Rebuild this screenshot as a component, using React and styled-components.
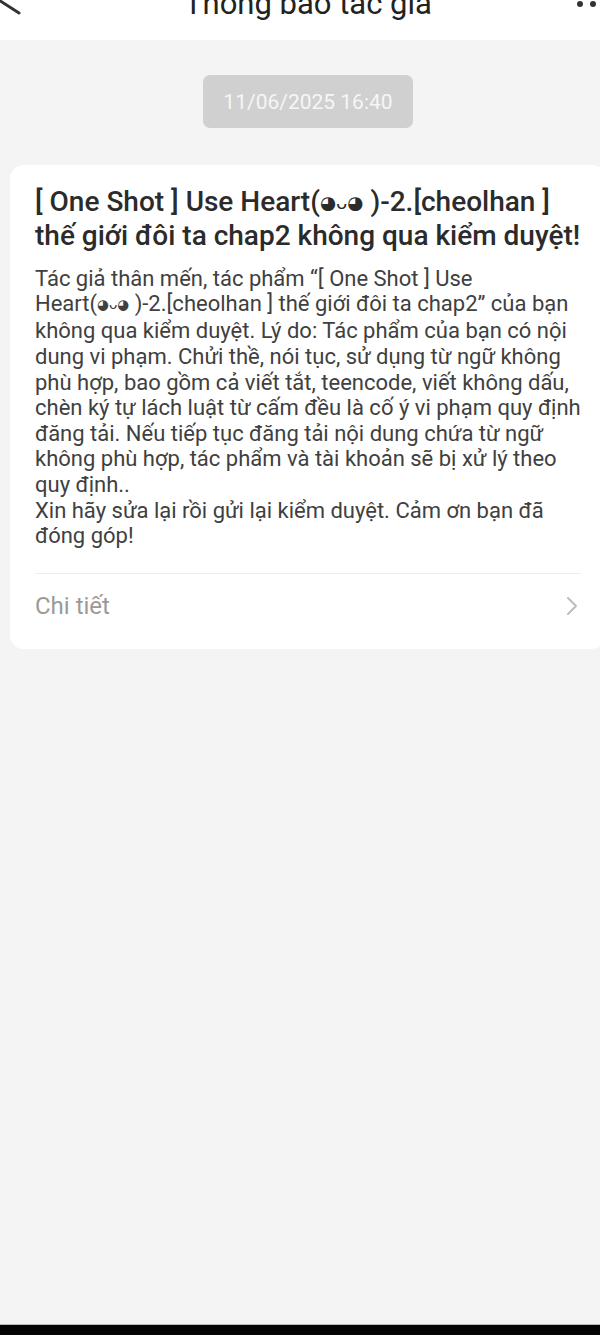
import React from "react";
import styled, { createGlobalStyle } from "styled-components";

const GlobalStyle = createGlobalStyle`
  html, body {
    margin: 0;
    padding: 0;
    background: #f4f4f4;
    overflow-x: hidden;
  }
  body {
    font-family: Roboto, "Noto Sans", "DejaVu Sans", sans-serif;
  }
`;

const Face = ({ size }) => <Emo $size={size}>◕ᴗ◕</Emo>;

// line breaks follow the app's own wrapping
const bodyLines = [
  <>Tác giả thân mến, tác phẩm “[ One Shot ] Use</>,
  <>
    Heart(<Face size="0.62em" /> )-2.[cheolhan ] thế giới đôi ta chap2” của bạn
  </>,
  <>không qua kiểm duyệt. Lý do: Tác phẩm của bạn có nội</>,
  <>dung vi phạm. Chửi thề, nói tục, sử dụng từ ngữ không</>,
  <>phù hợp, bao gồm cả viết tắt, teencode, viết không dấu,</>,
  <>chèn ký tự lách luật từ cấm đều là cố ý vi phạm quy định</>,
  <>đăng tải. Nếu tiếp tục đăng tải nội dung chứa từ ngữ</>,
  <>không phù hợp, tác phẩm và tài khoản sẽ bị xử lý theo</>,
  <>quy định..</>,
  <>Xin hãy sửa lại rồi gửi lại kiểm duyệt. Cảm ơn bạn đã</>,
  <>đóng góp!</>,
];

const App = () => {
  return (
    <Screen>
      <GlobalStyle />
      <Header>
        <NavBar>
          <NavSlot>
            <BackIcon viewBox="0 0 32 32">
              <path d="M27 -6 L2 10 L27 26" />
            </BackIcon>
          </NavSlot>
          <Title>Thông báo tác giả</Title>
          <NavSlot $right>
            <MoreIcon viewBox="0 0 32 8">
              <circle cx="3" cy="4" r="3" />
              <circle cx="16" cy="4" r="3" />
              <circle cx="29" cy="4" r="3" />
            </MoreIcon>
          </NavSlot>
        </NavBar>
      </Header>
      <Content>
        <DateBadge>11/06/2025 16:40</DateBadge>
        <Card>
          <CardTitle>
            [ One Shot ] Use Heart(<Face size="0.66em" /> )-2.[cheolhan ] thế giới đôi ta chap2
            không qua kiểm duyệt!
          </CardTitle>
          <CardBody>
            {bodyLines.map((line, i) => (
              <BodyLine key={i}>{line}</BodyLine>
            ))}
          </CardBody>
          <DetailRow>
            <span>Chi tiết</span>
            <Chevron viewBox="0 0 12 20">
              <path d="M2 2 L10 10 L2 18" />
            </Chevron>
          </DetailRow>
        </Card>
      </Content>
      <BottomBar />
    </Screen>
  );
};

export default App;

const Screen = styled.div`
  width: 616px;
  min-height: 1335px;
  display: flex;
  flex-direction: column;
  background: #f4f4f4;
`;

const Header = styled.div`
  height: 40px;
  background: #ffffff;
  overflow: hidden;
`;

const NavBar = styled.div`
  height: 56px;
  margin-top: -25px;
  display: flex;
  align-items: center;
`;

const NavSlot = styled.div`
  width: 80px;
  height: 100%;
  display: flex;
  align-items: center;
  justify-content: ${(p) => (p.$right ? "flex-end" : "flex-start")};
  padding-right: ${(p) => (p.$right ? "7px" : "0")};
  box-sizing: border-box;
`;

const BackIcon = styled.svg`
  width: 32px;
  height: 32px;
  margin-left: -8px;
  overflow: visible;
  fill: none;
  stroke: #333333;
  stroke-width: 3;
  stroke-linecap: round;
  stroke-linejoin: round;
`;

const Title = styled.div`
  flex: 1;
  text-align: center;
  font-size: 31px;
  line-height: 1;
  color: #222222;
`;

const MoreIcon = styled.svg`
  width: 32px;
  height: 8px;
  fill: #333333;
  margin-top: 2px;
`;

const Content = styled.div`
  flex: 1;
  display: flex;
  flex-direction: column;
  align-items: center;
  padding-top: 35px;
`;

const DateBadge = styled.div`
  height: 53px;
  box-sizing: border-box;
  padding: 0 20px;
  display: flex;
  align-items: center;
  border-radius: 7px;
  background: #d0d0d0;
  color: #f6f6f6;
  font-size: 21px;
`;

const Card = styled.div`
  align-self: stretch;
  margin: 37px 10px 0;
  padding: 20px 25px 29px;
  background: #ffffff;
  border-radius: 14px;
`;

const Emo = styled.span`
  font-family: "DejaVu Sans", sans-serif;
  font-size: ${(p) => p.$size};
  font-weight: 400;
  vertical-align: 0.12em;
`;

const CardTitle = styled.div`
  font-size: 28px;
  font-weight: 500;
  line-height: 33.5px;
  color: #2b2b2b;
`;

const CardBody = styled.div`
  margin-top: 13px;
  font-size: 22px;
  line-height: 25.6px;
  color: #404040;
`;

const BodyLine = styled.span`
  display: block;
  white-space: nowrap;
`;

const DetailRow = styled.div`
  margin-top: 24px;
  padding-top: 18px;
  border-top: 1px solid #ececec;
  display: flex;
  align-items: center;
  justify-content: space-between;
  font-size: 24px;
  line-height: 28px;
  color: #9a9a9a;
`;

const Chevron = styled.svg`
  width: 12px;
  height: 20px;
  margin-right: 3px;
  fill: none;
  stroke: #bdbdbd;
  stroke-width: 2;
  stroke-linecap: round;
  stroke-linejoin: round;
`;

const BottomBar = styled.div`
  height: 10px;
  border-top: 1px solid #bbbbbb;
  background: #050505;
`;
